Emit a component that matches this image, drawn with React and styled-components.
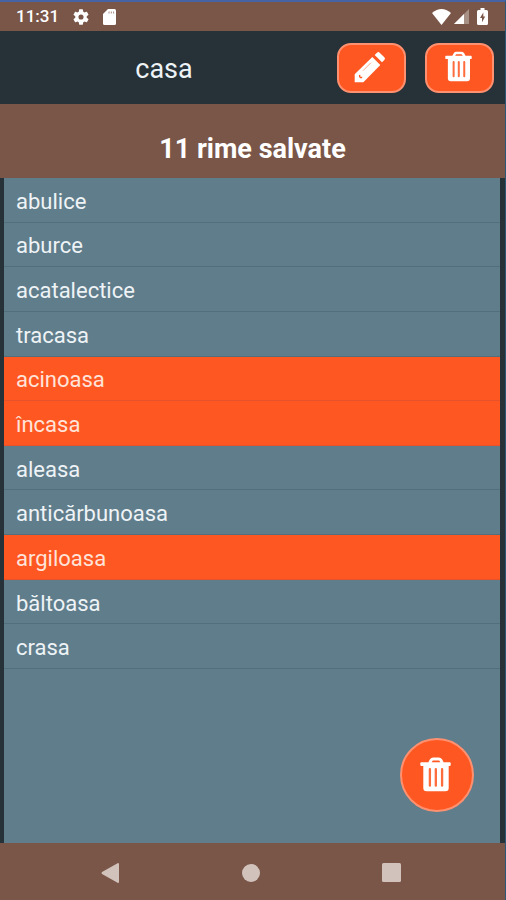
import React, { useState } from "react";
import styled, { createGlobalStyle } from "styled-components";

const colors = {
  brown: "#795648",
  dark: "#263238",
  slate: "#607d8b",
  orange: "#ff5722",
  outline: "#ff9170",
  text: "#eef3f6",
  nav: "#d2c2bc",
};

const GlobalStyle = createGlobalStyle`
  *, *::before, *::after { box-sizing: border-box; }
  body { margin: 0; background: ${colors.dark}; }
  button { font: inherit; color: inherit; padding: 0; border: 0; background: none; cursor: pointer; }
`;

const Screen = styled.div`
  display: flex;
  flex-direction: column;
  min-height: 100vh;
  border-top: 2px solid #4563a5;
  border-right: 1px solid #2b5876;
  background: ${colors.dark};
  color: ${colors.text};
  font-family: Roboto, "Noto Sans", sans-serif;
`;

const StatusBar = styled.div`
  display: flex;
  align-items: center;
  justify-content: space-between;
  height: 29px;
  padding: 0 17px 0 16px;
  background: ${colors.brown};
  color: #fff;
  font-size: 17px;
  font-weight: 500;
  line-height: 29px;
`;

const StatusGroup = styled.div`
  display: flex;
  align-items: center;
  gap: ${(p) => p.$gap}px;

  svg { display: block; }
`;

const Header = styled.header`
  display: flex;
  align-items: center;
  gap: 19px;
  height: 73px;
  padding: 0 11px 0 0;
`;

const Word = styled.h1`
  flex: 1;
  margin: 0;
  padding: 2px 0 0 10px;
  font-size: 27px;
  font-weight: 400;
  line-height: 32px;
  text-align: center;
`;

const ActionButton = styled.button`
  display: grid;
  place-items: center;
  width: 69px;
  height: 50px;
  padding: 0 3px 2px 0;
  border: 2px solid ${colors.outline};
  border-radius: 14px;
  background: ${colors.orange};
  color: #fff;
`;

const Summary = styled.h2`
  margin: 0;
  padding: 29px 0 13px;
  background: ${colors.brown};
  color: #fff;
  font-size: 27px;
  font-weight: 700;
  line-height: 32px;
  text-align: center;
`;

const Panel = styled.main`
  position: relative;
  flex: 1;
  margin: 0 5px 0 4px;
  background: ${colors.slate};
`;

const RhymeList = styled.ul`
  display: grid;
  grid-auto-rows: 1fr;
  min-height: 491px;
  margin: 0;
  padding: 0;
  list-style: none;
`;

const RhymeRow = styled.button`
  display: flex;
  align-items: center;
  width: 100%;
  height: 100%;
  padding: 4px 12px 0;
  border-bottom: 1px solid ${(p) => (p.$selected ? "#e8522a" : "#526f7c")};
  background: ${(p) => (p.$selected ? colors.orange : colors.slate)};
  color: ${(p) => (p.$selected ? "#ffe3d9" : colors.text)};
  font-size: 22px;
  line-height: 28px;
  text-align: left;
`;

const FloatingButton = styled(ActionButton)`
  position: absolute;
  right: 26px;
  bottom: 31px;
  width: 74px;
  height: 74px;
  border-radius: 50%;
`;

const NavBar = styled.nav`
  display: grid;
  grid-template-columns: repeat(3, 1fr);
  height: 57px;
  padding: 2px 43px 0 39px;
  background: ${colors.brown};
  color: ${colors.nav};
`;

const NavButton = styled.button`
  display: grid;
  place-items: center;
`;

const TrashIcon = ({ width, height }) => (
  <svg width={width} height={height} viewBox="0 0 94 104" fill="none" aria-hidden="true">
    <path d="M29 18 34 8Q36 5 40 5H57Q61 5 63 8L68 18" stroke="currentColor" strokeWidth="9" />
    <rect x="1" y="15" width="92" height="11" rx="3" fill="currentColor" />
    <path d="M10 24H87V93Q87 103 77 103H20Q10 103 10 93Z" fill="currentColor" />
    <path d="M30 36V86M48 36V86M67 36V86" stroke="#ff6c3e" strokeWidth="7" strokeLinecap="round" />
  </svg>
);

const PencilIcon = () => (
  <svg width="32" height="32" viewBox="0 0 96 96" aria-hidden="true">
    <path d="M62 12 69 5Q73 1 77 5L91 19Q95 23 91 27L84 34Z" fill="currentColor" />
    <path d="M55 18 79 42 28 94H2V70Z" fill="currentColor" />
    <path d="M27 59 51 35" stroke="#ffa88b" strokeWidth="3" />
    <path d="M15 72 19 71V77H25L24 82 19 82 15 78Z" fill="#ff5722" />
  </svg>
);

const GearIcon = () => (
  <svg width="16" height="16" viewBox="2 2 20 20" fill="currentColor" aria-hidden="true">
    <path d="M19.14 12.94c.04-.3.06-.61.06-.94s-.02-.64-.07-.94l2.03-1.58a.49.49 0 0 0 .12-.61l-1.92-3.32a.49.49 0 0 0-.59-.22l-2.39.96a7 7 0 0 0-1.62-.94l-.36-2.54A.48.48 0 0 0 13.92 2.4h-3.84a.48.48 0 0 0-.47.41l-.36 2.54c-.59.24-1.13.57-1.62.94l-2.39-.96a.49.49 0 0 0-.59.22L2.74 8.87a.48.48 0 0 0 .12.61l2.03 1.58a6 6 0 0 0 0 1.88l-2.03 1.58a.49.49 0 0 0-.12.61l1.92 3.32c.12.22.37.29.59.22l2.39-.96c.5.38 1.03.7 1.62.94l.36 2.54c.05.24.24.41.48.41h3.84c.24 0 .44-.17.47-.41l.36-2.54a7 7 0 0 0 1.62-.94l2.39.96c.22.08.47 0 .59-.22l1.92-3.32a.48.48 0 0 0-.12-.61zM12 15.2a3.2 3.2 0 1 1 0-6.4 3.2 3.2 0 0 1 0 6.4z" />
  </svg>
);

const CardIcon = () => (
  <svg width="13" height="16" viewBox="0 0 13 16" aria-hidden="true">
    <path d="M5 0H11.5Q13 0 13 1.5V14.5Q13 16 11.5 16H1.5Q0 16 0 14.5V5Z" fill="currentColor" />
    <path d="M6 2.5V4.5M8.3 2.5V4.5M10.6 2.5V4.5" stroke="#a58c82" strokeWidth="1" />
  </svg>
);

const WifiIcon = () => (
  <svg width="19" height="16" viewBox="0 0 20 16" preserveAspectRatio="none" fill="currentColor" aria-hidden="true">
    <path d="M0 4Q10-4 20 4L10 16Z" />
  </svg>
);

const SignalIcon = () => (
  <svg width="15" height="15" viewBox="0 0 15 15" fill="currentColor" aria-hidden="true">
    <path d="M15 0V15H0Z" opacity="0.35" />
    <path d="M10 5V15H0Z" />
  </svg>
);

const BatteryIcon = () => (
  <svg width="11" height="17" viewBox="0 0 11 17" aria-hidden="true">
    <path d="M3.5 0H7.5V2H9.5Q11 2 11 3.5V15.5Q11 17 9.5 17H1.5Q0 17 0 15.5V3.5Q0 2 1.5 2H3.5Z" fill="currentColor" />
    <path d="M6.3 4.5 3 10H5V14.2L8.2 8.5H6.3Z" fill="#795648" />
  </svg>
);

const words = [
  "abulice", "aburce", "acatalectice", "tracasa", "acinoasa", "încasa",
  "aleasa", "anticărbunoasa", "argiloasa", "băltoasa", "crasa",
];

export default function App() {
  const [selected, setSelected] = useState(["acinoasa", "încasa", "argiloasa"]);
  const toggle = (word) =>
    setSelected((list) => (list.includes(word) ? list.filter((w) => w !== word) : [...list, word]));

  return (
    <>
      <GlobalStyle />
      <Screen>
        <StatusBar>
          <StatusGroup $gap={14}>
            <span>11:31</span>
            <GearIcon />
            <CardIcon />
          </StatusGroup>
          <StatusGroup $gap={3}>
            <WifiIcon />
            <StatusGroup $gap={8}>
              <SignalIcon />
              <BatteryIcon />
            </StatusGroup>
          </StatusGroup>
        </StatusBar>
        <Header>
          <Word>casa</Word>
          <ActionButton type="button" aria-label="Editează">
            <PencilIcon />
          </ActionButton>
          <ActionButton type="button" aria-label="Șterge">
            <TrashIcon width={27} height={31} />
          </ActionButton>
        </Header>
        <Summary>11 rime salvate</Summary>
        <Panel>
          <RhymeList>
            {words.map((word) => (
              <li key={word}>
                <RhymeRow
                  type="button"
                  $selected={selected.includes(word)}
                  aria-pressed={selected.includes(word)}
                  onClick={() => toggle(word)}
                >
                  {word}
                </RhymeRow>
              </li>
            ))}
          </RhymeList>
          <FloatingButton type="button" aria-label="Șterge rimele selectate">
            <TrashIcon width={31} height={35} />
          </FloatingButton>
        </Panel>
        <NavBar aria-label="Sistem">
          <NavButton type="button" aria-label="Înapoi">
            <svg width="18" height="20" viewBox="0 0 18 20" fill="currentColor" aria-hidden="true">
              <path d="M17 0Q18 0 18 1V19Q18 20 17 20L1 11Q0 10 1 9Z" />
            </svg>
          </NavButton>
          <NavButton type="button" aria-label="Acasă">
            <svg width="18" height="18" viewBox="0 0 18 18" fill="currentColor" aria-hidden="true">
              <circle cx="9" cy="9" r="9" />
            </svg>
          </NavButton>
          <NavButton type="button" aria-label="Recente">
            <svg width="19" height="19" viewBox="0 0 19 19" fill="currentColor" aria-hidden="true">
              <rect width="19" height="19" rx="1.5" />
            </svg>
          </NavButton>
        </NavBar>
      </Screen>
    </>
  );
}
